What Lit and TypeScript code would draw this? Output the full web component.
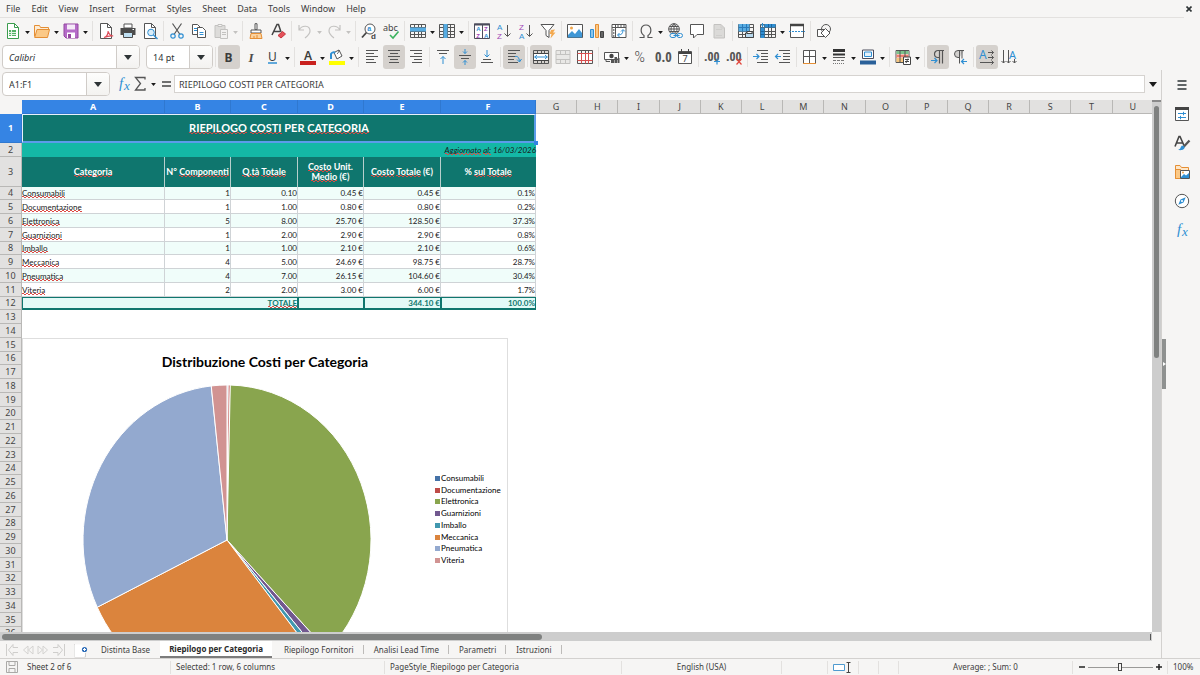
import { LitElement, html, css, svg, nothing } from "lit";
import { customElement, property, state } from "lit/decorators.js";
import { classMap } from "lit/directives/class-map.js";

const G = "#555555";
const B = "#2f8fd3";
const D = "#c3c2c0";

const tableGrid = (c: string) => svg`<path d="M.5 1.5h15v13H.5zM.5 4.5h15M.5 8.5h15M.5 11.5h15M4.5 1.5v13M8.5 1.5v13M11.5 1.5v13" fill="none" stroke=${c}/>`;
const bars = (x: number[][]) => svg`<g stroke=${G}>${x.map(([a, b, y]) => svg`<path d="M${a} ${y}H${b}"/>`)}</g>`;

const ICONS: Record<string, unknown> = {
  new: svg`<path d="M2.5.5h7l4 4v11h-11z" fill="#fff" stroke="#3c9d4e"/><path d="M9.5.5v4h4" fill="none" stroke="#3c9d4e"/><path d="M4 7h7v6H4z" fill="#54b266"/><path d="M4 9.500h7M4 11.500h7M6.500 7v6" stroke="#dff3e2"/>`,
  open: svg`<path d="M.5 13.500V2.500h5l1 2h8v4" fill="#fdebd3" stroke="#e58f35"/><path d="M3 6.500h12.500l-2 8H.700z" fill="#fbc987" stroke="#e58f35"/>`,
  save: svg`<path d="M1 1h14v14H3l-2-2z" fill="#b56cc8" stroke="#94469f"/><path d="M4 1.500h8v5H4z" fill="#f5eaf8"/><path d="M4 9.500h8V15H4z" fill="#fff"/><path d="M5 11h3v4H5z" fill="#94469f"/>`,
  pdf: svg`<path d="M2.500.5h7l4 4v11h-11z" fill="#fff" stroke=${G}/><path d="M9.500.5v4h4" fill="none" stroke=${G}/><path d="M6 14.500c2-.5 4-3 4.200-6.500.5 3 2.300 4.800 5 5-3-.6-6 .2-9.200 1.500z" fill="none" stroke="#dc4b58" stroke-width="1.200"/>`,
  print: svg`<path d="M4 1h8v4H4z" fill="#fff" stroke=${G}/><path d="M.5 5h15v7H.5z" fill="#4b4b4b"/><path d="M3.500 9.500h9v5h-9z" fill="#bfe0f3" stroke="#4b4b4b"/><path d="M12.500 6.500h1.500" stroke="#fff"/>`,
  preview: svg`<path d="M2.500.5h7l4 4v11h-11z" fill="#fff" stroke=${G}/><path d="M9.500.5v4h4" fill="none" stroke=${G}/><circle cx="9" cy="9.500" r="3.300" fill="#d9edf9" stroke=${B}/><path d="M11.500 12l4 4" stroke=${B} stroke-width="1.500"/>`,
  cut: svg`<path d="M3.500.5l7.500 11M12.500.5L5 11.500" stroke=${G} stroke-width="1.200"/><circle cx="4" cy="13" r="2.200" fill="none" stroke=${B} stroke-width="1.200"/><circle cx="12" cy="13" r="2.200" fill="none" stroke=${B} stroke-width="1.200"/>`,
  copy: svg`<path d="M1.500 1.500h5l3 3v7h-8z" fill="#fff" stroke=${G}/><path d="M6.500 4.500h5l3 3v7h-8z" fill="#fff" stroke=${G}/><path d="M3 5.500h3M3 7.500h3M8.500 9.500h4M8.500 11.500h4" stroke=${B}/>`,
  paste: svg`<path d="M2 2.500h10v12H2z" fill="#dddcda" stroke=${D}/><path d="M5 1.500h4v2H5z" fill="#f6f5f4" stroke=${D}/><path d="M7.500 6.500h7v9h-7z" fill="#f2f1f0" stroke=${D}/><path d="M9 9.500h4M9 11.500h4" stroke=${D}/>`,
  clone: svg`<path d="M7 .7h2v6H7z" fill="#fff" stroke=${G}/><path d="M3 7h10v3H3z" fill="#fff" stroke=${G}/><path d="M3 10.500l-1 5h12l-1-5z" fill="#fbd3a0" stroke="#e58f35"/><path d="M6 15v-2M9 15v-3" stroke="#e58f35"/>`,
  clear: svg`<path d="M2 12L7 1.500h1.500L11 9M4 8.500h6" fill="none" stroke="#444" stroke-width="1.500"/><path d="M8 12.500l4.500-4 3 2.500-4.500 4z" fill="#e4525a" stroke="#c8323c"/>`,
  undo: svg`<path d="M2 2v5h5M2.200 6.800C5 1.800 13 2 13 8c0 3-2.500 5-5 7" fill="none" stroke=${D} stroke-width="1.200"/>`,
  redo: svg`<path d="M14 2v5H9M13.800 6.800C11 1.800 3 2 3 8c0 3 2.500 5 5 7" fill="none" stroke=${D} stroke-width="1.200"/>`,
  find: svg`<circle cx="9" cy="6" r="5" fill="#fff" stroke=${G}/><path d="M5.500 9.500l-4.500 5" stroke="#444" stroke-width="1.800"/><text x="6.200" y="8" font-size="7" font-weight="700" font-family="Liberation Sans, sans-serif" fill=${B}>a</text><text x="10" y="15.500" font-size="8" font-weight="700" font-family="Liberation Sans, sans-serif" fill="#444">d</text>`,
  spell: svg`<text x="0" y="7.500" font-size="9" fill="#444">abc</text><path d="M7 12l3 3 5.500-6.500" fill="none" stroke="#3cb35f" stroke-width="1.600"/>`,
  row: svg`${tableGrid(G)}<path d="M0 4.500h16v4H0z" fill="#57ace2"/>`,
  col: svg`${tableGrid(G)}<path d="M4.500 1v14h4V1z" fill="#57ace2"/>`,
  sort: svg`<path d="M.5 1h15v14.500H.5zM8.500 1v14" fill="#fff" stroke="#4c4c5c"/><path d="M0 1.500h16" stroke="#4c4c5c" stroke-width="2"/><g font-size="6" font-weight="700" font-family="Liberation Sans, sans-serif"><text x="2.200" y="7.500" fill=${B}>A</text><text x="2.200" y="14.500" fill="#a045b5">Z</text><text x="10" y="7.500" fill="#a045b5">Z</text><text x="10" y="14.500" fill=${B}>A</text></g>`,
  asc: svg`<g font-size="8" font-family="Liberation Sans, sans-serif"><text x="1" y="6.500" fill=${B}>A</text><text x="1" y="15.500" fill="#a045b5">Z</text></g><path d="M11.500 2v11M8.500 10.500l3 3 3-3" fill="none" stroke=${G}/>`,
  desc: svg`<g font-size="8" font-family="Liberation Sans, sans-serif"><text x="1" y="6.500" fill="#a045b5">Z</text><text x="1" y="15.500" fill=${B}>A</text></g><path d="M11.500 2v11M8.500 10.500l3 3 3-3" fill="none" stroke=${G}/>`,
  filter: svg`<path d="M1 1.500h13l-5 6v7l-3-2V7.500z" fill="#fff" stroke=${G}/><path d="M11 7l4-.5-2 3h2.500l-5 6 1-4.500H9.500z" fill="#f3a94f"/>`,
  image: svg`<path d="M.5 1.500h15v13H.5z" fill="#fff" stroke=${G}/><path d="M1 12l4-4 3 3 4-5 3 4v4.500H1z" fill="#3f97d6"/><circle cx="4.500" cy="5" r="1.500" fill="#f0a64d"/>`,
  chart: svg`<path d="M1.500 6.500h3v8h-3z" fill="#8cc5ea" stroke=${B}/><path d="M6.500 1.500h3v13h-3z" fill="#fbc987" stroke="#e58f35"/><path d="M11.500 8.500h3v6h-3z" fill="#666" stroke="#444"/>`,
  pivot: svg`<path d="M1 1.500h14v13H1zM1 4.500h14M4.500 1.500v13" fill="#fff" stroke=${G}/><path d="M6 3h8M2.800 6v8" stroke=${G} stroke-dasharray="2 1"/><path d="M7 12c3.500 0 5-1.500 5-5M10 8.500l2-2 2 2M8.500 10l-2 2 2 2" fill="none" stroke=${B}/>`,
  omega: svg`<path d="M1.500 14.500H6v-2C1.500 9.500 2.500 2 8 2s6.500 7.500 2 10.500v2h4.500" fill="none" stroke=${G} stroke-width="1.200"/>`,
  link: svg`<circle cx="7" cy="6" r="5.300" fill="#fff" stroke=${G}/><path d="M1.700 6h10.600M7 .7v10M2.500 3.500h9M2.500 8.500h9M7 .7c-4 3-4 8 0 10.600M7 .7c4 3 4 8 0 10.600" fill="none" stroke=${G}/><rect x="3" y="10.500" width="6" height="4" rx="2" fill="#f6f5f4" stroke=${B}/><rect x="10" y="10.500" width="5.500" height="4" rx="2" fill="#f6f5f4" stroke=${B}/><path d="M6.500 12.500h6" stroke=${B}/>`,
  comment: svg`<path d="M1.500 1.500h13v10H8l-3.500 3.500v-3.500h-3z" fill="#fff" stroke=${G}/>`,
  headfoot: svg`<path d="M3 1.500h7l3.500 3.500v10H3z" fill="#dbdad8" stroke=${D}/><path d="M10 1.500v3.500h3.500M5 6.500h6M5 12.500h6" fill="none" stroke="#cfcecc"/>`,
  printarea: svg`${tableGrid(G)}<path d="M.5 1h11v7.500H.5z" fill="#57ace2"/><path d="M.5 4.500h11M4.500 1v7.500M8.500 1v7.500" stroke="#2b7ab8"/><path d="M7.500 10h8v4.500h-8z" fill="#b8d9ee" stroke="#444"/><path d="M9 8.500h5v2H9z" fill="#fff" stroke="#444"/>`,
  freeze: svg`${tableGrid(G)}<path d="M4.500 1h11v3.500h-11zM.5 4.500h4v10.500h-4z" fill="#2f8fd3"/><path d="M8.500 1v3.500M11.500 1v3.500M.5 8.500h4M.5 11.500h4" stroke="#1b66a0"/><path d="M2.500 0v4M.8 2h3.500" stroke=${B}/>`,
  split: svg`<path d="M1.500 2.500h13v12h-13z" fill="#fff" stroke=${G}/><path d="M1 2h14" stroke="#444" stroke-width="2.500"/><path d="M0 8.500h16" stroke=${B} stroke-dasharray="2 1"/>`,
  shapes: svg`<path d="M1.500 6.500h7v7h-7z" fill="#fff" stroke=${G}/><circle cx="10" cy="6" r="4.500" fill="none" stroke=${G}/><path d="M9.500 5.500l4.500 4.500-4.500 4.500L5 10z" fill="#fff" stroke=${G}/>`,
  bold: svg`<text x="3.500" y="12.500" font-size="12" font-weight="700" fill="#3c3c3c">B</text>`,
  italic: svg`<text x="5.500" y="12.500" font-size="13" font-style="italic" font-family="Liberation Serif, serif" font-weight="700" fill="#4c4c4c">I</text>`,
  underline: svg`<text x="3" y="11.500" font-size="12" fill="#3c3c3c">U</text><path d="M3 14h9" stroke=${B} stroke-width="1.500"/>`,
  fontcolor: svg`<text x="4" y="10.500" font-size="12" font-weight="600" fill="#3c3c3c">A</text><path d="M0 12h16v4H0z" fill="#c9211e"/>`,
  highlight: svg`<path d="M5 3.500l5-2.500 3 6-5 3z" fill="#fff" stroke=${G}/><path d="M2 10V5c1-2 3-2 4-1" fill="none" stroke=${B} stroke-width="2"/><path d="M10 1c0 2-1 3-2 4" fill="none" stroke=${G}/><path d="M0 12h16v4H0z" fill="#ffff00"/>`,
  left: bars([[2, 14, 1.5], [2, 10, 4.5], [2, 14, 7.5], [2, 10, 10.5], [2, 12, 13.5]]),
  center: bars([[2, 14, 1.5], [4, 12, 4.5], [2, 14, 7.5], [4, 12, 10.5], [3, 13, 13.5]]),
  right: bars([[2, 14, 1.5], [6, 14, 4.5], [2, 14, 7.5], [6, 14, 10.5], [4, 14, 13.5]]),
  top: svg`${bars([[2, 14, 1.5], [4, 12, 4.5]])}<path d="M8 15V7.500M5.500 10L8 7.500 10.500 10" fill="none" stroke=${B}/>`,
  middle: svg`${bars([[2, 14, 6.5], [4, 12, 9.5]])}<path d="M8 0v4.500M6 2.500l2 2 2-2M8 16v-4.500M6 13.500l2-2 2 2" fill="none" stroke=${B}/>`,
  bottom: svg`${bars([[4, 12, 10.5], [2, 14, 13.5]])}<path d="M8 1v7M5.500 5.500L8 8l2.500-2.500" fill="none" stroke=${B}/>`,
  wrap: svg`${bars([[2, 14, 1.5], [2, 10, 4.5], [2, 9, 7.5], [2, 8, 10.5], [2, 12, 13.5]])}<path d="M9 7.500c3-.5 4 1 4.500 5M11 10.500l2.500 2.500 2-3" fill="none" stroke=${B}/>`,
  merge: svg`${tableGrid(G)}<path d="M1 5h14v6H1z" fill="#fff"/><path d="M.5 4.500h15M.5 11.500h15" stroke="#444"/><path d="M1.500 8h13M4 6L1.800 8 4 10M12 6l2.200 2L12 10" fill="none" stroke=${B}/>`,
  mergecells: svg`<path d="M1 1.500h14v13H1zM1 5.500h14M1 10.500h14M5.500 1.500v4M10.500 1.500v4M5.500 10.500v4M10.500 10.500v4" fill="#e9e8e6" stroke=${D}/>`,
  unmerge: svg`${tableGrid(G)}<path d="M1 5h14v6H1z" fill="#fff"/><path d="M.5 4.500h15M.5 11.500h15M4.500 4.500v10M8.500 4.500v10M11.500 4.500v10" stroke="#d94f50"/>`,
  currency: svg`<path d="M.5 3.500h14v7H.5z" fill="#fff" stroke=${G}/><circle cx="7.500" cy="7" r="2.200" fill="#444"/><path d="M7 10h3v4H7zM10.500 8h2.500v6h-2.500zM13.500 9h2v5h-2z" fill="#555"/><path d="M2 10.500v2h4" fill="none" stroke=${G}/>`,
  percent: svg`<text x="1.500" y="13" font-size="14" font-family="Roboto, sans-serif" font-weight="300" fill="#444">%</text>`,
  number: svg`<text x="0" y="13" font-size="14" font-family="Liberation Sans Narrow, Open Sans Condensed, sans-serif" fill="#555">0.0</text>`,
  date: svg`<path d="M1.500 2.500h13v12h-13z" fill="#fff" stroke=${G}/><path d="M1.500 4h13" stroke="#444" stroke-width="2"/><path d="M4.500 0v3M11.500 0v3" stroke="#444"/><text x="5.500" y="13" font-size="9" fill="#444">7</text>`,
  adddec: svg`<text x="0" y="12" font-size="13" font-family="Liberation Sans Narrow, Open Sans Condensed, sans-serif" fill="#555">.00</text><path d="M13 9.500v6M10 12.500h6" stroke=${B} stroke-width="1.200"/>`,
  deldec: svg`<text x="0" y="12" font-size="13" font-family="Liberation Sans Narrow, Open Sans Condensed, sans-serif" fill="#555">.00</text><path d="M10.500 10l5 5.500M15.500 10l-5 5.500" stroke="#e2453c" stroke-width="1.200"/>`,
  indent: svg`${bars([[4, 15, 1.5], [8, 15, 4.5], [8, 15, 7.5], [8, 15, 10.5], [4, 15, 13.5]])}<path d="M0 7.500h6M3.500 5L6 7.500 3.500 10" fill="none" stroke=${B} stroke-width="1.200"/>`,
  outdent: svg`${bars([[4, 15, 1.5], [8, 15, 4.5], [8, 15, 7.5], [8, 15, 10.5], [4, 15, 13.5]])}<path d="M6 7.500H.5M3 5L.5 7.500 3 10" fill="none" stroke=${B} stroke-width="1.200"/>`,
  borders: svg`<path d="M1.500 14.500v-13h12v13M1.500 7.500h12M7.500 1.500v13" fill="#fff" stroke=${G}/><path d="M1 14.500h13" stroke="#e58f35"/>`,
  lines: svg`<path d="M2 1.500h12" stroke="#333" stroke-width="3"/><path d="M2 5.500h12" stroke="#333" stroke-width="2"/><path d="M2 8.500h12" stroke="#555"/><path d="M2 11.500h12" stroke="#777" stroke-dasharray="3 1"/><path d="M2 14.500h12" stroke="#777" stroke-dasharray="1 1"/>`,
  bordercolor: svg`<path d="M2.500 1h11v8.500h-11z" fill="#fff" stroke="#4c4c5c"/><path d="M4.500 3h7v4.500h-7z" fill="#e6f1fa" stroke=${B}/><path d="M0 11.500h16v4H0z" fill="#2a6099"/>`,
  cond: svg`<path d="M1 1.500h13v12H1z" fill="#fff" stroke=${G}/><path d="M1.500 2h12v3h-12z" fill="#7cc48c"/><path d="M1.500 5.500h12v3h-12z" fill="#f08070"/><path d="M1.500 9h12v4h-12z" fill="#f7c77f"/><path d="M5 1.500v12M10 1.500v12" stroke=${G}/><path d="M8.500 8h7v7.500h-7z" fill="#fff" stroke="#444"/><path d="M10 10.500h4M10 12.500h4M13 9.500l-2 4.500" stroke="#444"/>`,
  ltr: svg`<path d="M14 1.500H8a3.500 3.500 0 0 0 0 7h1.500M9.500 1.500v13M12.500 1.500v13" fill="none" stroke=${G} stroke-width="1.200"/><path d="M1 11.500h6M4.500 9L7 11.500 4.500 14" fill="none" stroke=${B} stroke-width="1.200"/>`,
  rtl: svg`<path d="M12 1.500H6a3.500 3.500 0 0 0 0 7h1.500" fill="#d2d0ce" stroke=${G}/><path d="M7.500 1.500v13M10 1.500v8" stroke=${G}/><path d="M15 12.500H9.500M12 10l-2.500 2.500L12 15" fill="none" stroke=${B} stroke-width="1.200"/>`,
  horiz: svg`<text x="0" y="10" font-size="12" fill=${B}>A</text><path d="M9 3.500h5.500M9 8.500h5.500M1 13.500h13.500M12.500 1.500l2 2-2 2M12.500 6.500l2 2-2 2M12.500 11.500l2 2-2 2" fill="none" stroke=${G}/>`,
  vert: svg`<text x="8" y="10" font-size="11" fill=${B}>A</text><path d="M2.500 1v13M.5 12l2 2 2-2M7.500 1v13M5.500 12l2 2 2-2M13.500 10v4M11.500 12l2 2 2-2" fill="none" stroke=${G}/>`,
  fx: svg`<text x="3" y="12" font-size="15" font-style="italic" font-family="Liberation Serif, serif" fill=${B}>f</text><text x="8" y="14" font-size="13" font-style="italic" font-family="Liberation Serif, serif" fill=${B}>x</text>`,
  sigma: svg`<path d="M13 3.500v-2H3.500l5 6-5 6.500H13v-2" fill="none" stroke=${G} stroke-width="1.300"/>`,
  equal: svg`<path d="M4 6h9M4 10h9" stroke="#444" stroke-width="1.600"/>`,
  burger: svg`<path d="M3.500 4h9M3.500 8h9M3.500 12h9" stroke="#2e3436" stroke-width="1.400"/>`,
  props: svg`<path d="M1.500 1.500h13v13h-13z" fill="#fff" stroke=${G}/><path d="M1 2.500h14" stroke="#444" stroke-width="3"/><path d="M4 7.500h8M4 11.500h8M9.500 5.800v3.500M6.500 9.800v3.500" stroke=${B}/>`,
  styles: svg`<path d="M1 11.500L5 1.500h1l4 9M3 8h5.500" fill="none" stroke="#444" stroke-width="1.600"/><path d="M15.500 5.500L9.500 12" stroke=${G} stroke-width="2.200"/><path d="M4 15c3.500.5 7 0 6.500-3.500L8 10.500c-1.500 1-1 3.500-4 4.500z" fill=${B}/>`,
  gallery: svg`<path d="M1.500 14.500V1.500h4.500l1.500 2h7v3" fill="#fde6c8" stroke="#e58f35"/><path d="M1.500 14.500V5.500h5" fill="none" stroke="#e58f35"/><path d="M1.500 14.500h5v-9h-5z" fill="#fbc987" stroke="#e58f35"/><path d="M6.500 6.500h9v8h-9z" fill="#fff" stroke=${G}/><path d="M7 13l3-3 2 1.500 3-2.500v5H7z" fill=${B}/><circle cx="9" cy="8.500" r="1" fill="#f0a64d"/>`,
  navigator: svg`<circle cx="8" cy="8" r="6.700" fill="#fff" stroke=${G}/><path d="M11.700 4.300L9.500 9.500l-5.200 2.200L6.500 6.500z" fill=${B}/><circle cx="8" cy="8" r="1.100" fill="#fff"/>`,
  statussave: svg`<path d="M2.500 2.500h11v11h-11zM5 2.500v4h6v-4M5 13.500v-4h6v4" fill="none" stroke="#aaa9a7"/>`,
  newtab: svg`<path d="M1.500 2v13h11V11" fill="#fff" stroke="#cfcecc"/><path d="M1.500 2.500h7l3 3V15h-10z" fill="#fff"/><circle cx="11.500" cy="7.500" r="2.600" fill="#2c6cb8"/><path d="M11.500 6v3M10 7.500h3" stroke="#fff"/>`,
  first: svg`<path d="M1.500 2v12M13 5.500H8V2.500L3.500 8 8 13.500v-3h5" fill="none" stroke="#cfcecc"/>`,
  prev: svg`<path d="M8 4L3.500 8 8 12zM13 4L8.500 8 13 12z" fill="none" stroke="#d4d3d1"/>`,
  next: svg`<path d="M3 4l4.500 4L3 12zM8 4l4.500 4L8 12z" fill="none" stroke="#d4d3d1"/>`,
  last: svg`<path d="M14.500 2v12M3 5.500h5V2.500L12.500 8 8 13.500v-3H3" fill="none" stroke="#cfcecc"/>`,
};

const icon = (name: string) => html`<svg class="icon" viewBox="0 0 16 16" aria-hidden="true">${ICONS[name]}</svg>`;
const triangle = html`<svg class="tri" viewBox="0 0 8 5" aria-hidden="true"><path d="M0 0h8L4 5z" fill="currentColor" /></svg>`;

const iconCss = css`
  .icon {
    display: block;
    flex: none;
    width: 16px;
    height: 16px;
    overflow: visible;
    font-family: "Noto Sans", sans-serif;
  }
  .tri {
    display: block;
    flex: none;
    width: 5px;
    height: 3px;
  }
  button {
    display: flex;
    align-items: center;
    justify-content: center;
    margin: 0;
    padding: 0;
    border: 0;
    background: none;
    color: inherit;
    font: inherit;
  }
`;

type Tool = { icon: string; label: string; drop?: boolean; on?: boolean; off?: boolean } | "|";
const t = (icon: string, label: string, flags = ""): Tool => ({
  icon,
  label,
  drop: flags.includes("d"),
  on: flags.includes("p"),
  off: flags.includes("x"),
});

const STANDARD: Tool[] = [
  t("new", "New", "d"), t("open", "Open", "d"), t("save", "Save", "d"), "|",
  t("pdf", "Export as PDF"), t("print", "Print"), t("preview", "Print Preview"), "|",
  t("cut", "Cut"), t("copy", "Copy"), t("paste", "Paste", "dx"), "|",
  t("clone", "Clone Formatting"), t("clear", "Clear Direct Formatting"), "|",
  t("undo", "Undo", "dx"), t("redo", "Redo", "dx"), "|",
  t("find", "Find and Replace"), t("spell", "Spelling"), "|",
  t("row", "Row", "d"), t("col", "Column", "d"), "|",
  t("sort", "Sort"), t("asc", "Sort Ascending"), t("desc", "Sort Descending"), t("filter", "AutoFilter"), "|",
  t("image", "Insert Image"), t("chart", "Insert Chart"), t("pivot", "Pivot Table"), "|",
  t("omega", "Special Character", "d"), t("link", "Hyperlink"), t("comment", "Comment"), t("headfoot", "Headers and Footers", "x"), "|",
  t("printarea", "Define Print Area"), t("freeze", "Freeze Rows and Columns", "d"), t("split", "Split Window"), "|",
  t("shapes", "Show Draw Functions"),
];

const FORMATTING: Tool[] = [
  t("bold", "Bold", "p"), t("italic", "Italic"), t("underline", "Underline", "d"), "|",
  t("fontcolor", "Font Color", "d"), t("highlight", "Background Color", "d"), "|",
  t("left", "Align Left"), t("center", "Align Center", "p"), t("right", "Align Right"), "|",
  t("top", "Align Top"), t("middle", "Center Vertically", "p"), t("bottom", "Align Bottom"), "|",
  t("wrap", "Wrap Text", "p"), "|",
  t("merge", "Merge and Center", "p"), t("mergecells", "Merge Cells", "x"), t("unmerge", "Unmerge Cells"), "|",
  t("currency", "Format as Currency", "d"), t("percent", "Format as Percent"), t("number", "Format as Number"), t("date", "Format as Date"), "|",
  t("adddec", "Add Decimal Place"), t("deldec", "Delete Decimal Place"), "|",
  t("indent", "Increase Indent"), t("outdent", "Decrease Indent"), "|",
  t("borders", "Borders", "d"), t("lines", "Border Style", "d"), t("bordercolor", "Border Color", "d"), "|",
  t("cond", "Conditional", "d"), "|",
  t("ltr", "Left-To-Right", "p"), t("rtl", "Right-To-Left"), "|",
  t("horiz", "Text direction left to right", "p"), t("vert", "Text direction top to bottom"),
];

@customElement("tool-strip")
class ToolStrip extends LitElement {
  @property({ attribute: false }) tools: Tool[] = [];

  static styles = [
    iconCss,
    css`
      :host {
        display: flex;
        align-items: center;
      }
      .tool {
        width: 22px;
        height: 24px;
        border-radius: 3px;
      }
      .on {
        background: #d5d1cd;
      }
      .drop {
        width: 7px;
        height: 24px;
        padding-top: 2px;
        color: #1a1a1a;
      }
      .drop:disabled {
        color: #c3c2c0;
      }
      .sep {
        width: 1px;
        height: 20px;
        margin: 0 2px;
        background: #e3e1df;
      }
      .drop + .sep {
        margin-left: 3px;
      }
    `,
  ];

  render() {
    return this.tools.map((tool) =>
      tool === "|"
        ? html`<span class="sep"></span>`
        : html`<button class=${classMap({ tool: true, on: !!tool.on })} aria-label=${tool.label} ?disabled=${tool.off}>${icon(tool.icon)}</button>${tool.drop
              ? html`<button class="drop" aria-label="${tool.label} options" ?disabled=${tool.off}>${triangle}</button>`
              : nothing}`
    );
  }
}

@customElement("combo-box")
class ComboBox extends LitElement {
  @property() label = "";
  @property() value = "";
  @property({ type: Boolean }) slanted = false;

  static styles = [
    iconCss,
    css`
      :host {
        display: block;
      }
      .combo {
        display: grid;
        grid-template-columns: 1fr 23px;
        height: 24px;
        box-sizing: border-box;
        border: 1px solid #d0ccc8;
        border-radius: 4px;
        background: #fff;
        overflow: hidden;
      }
      .field {
        grid-area: 1 / 1 / 2 / 3;
        appearance: none;
        width: 100%;
        padding: 0 6px;
        border: 0;
        background: none;
        color: #2e3436;
        font: 9px "Noto Sans", sans-serif;
      }
      .slanted {
        font-style: italic;
      }
      .knob {
        grid-area: 1 / 2;
        display: flex;
        align-items: center;
        justify-content: center;
        border-left: 1px solid #d0ccc8;
        background: linear-gradient(#fdfdfc, #f3f2f0);
        pointer-events: none;
        color: #2e3436;
      }
      .knob .tri {
        width: 8px;
        height: 5px;
      }
    `,
  ];

  render() {
    return html`<div class="combo">
      <select class=${classMap({ field: true, slanted: this.slanted })} aria-label=${this.label}>
        <option>${this.value}</option>
      </select>
      <span class="knob">${triangle}</span>
    </div>`;
  }
}

const CATEGORIES = [
  { name: "Consumabili", parts: 1, qty: "0.10", unit: "0.45", total: 0.45, share: "0.1%", color: "#4572a7" },
  { name: "Documentazione", parts: 1, qty: "1.00", unit: "0.80", total: 0.8, share: "0.2%", color: "#be4b48" },
  { name: "Elettronica", parts: 5, qty: "8.00", unit: "25.70", total: 128.5, share: "37.3%", color: "#89a54e" },
  { name: "Guarnizioni", parts: 1, qty: "2.00", unit: "2.90", total: 2.9, share: "0.8%", color: "#71588f" },
  { name: "Imballo", parts: 1, qty: "1.00", unit: "2.10", total: 2.1, share: "0.6%", color: "#4198af" },
  { name: "Meccanica", parts: 4, qty: "5.00", unit: "24.69", total: 98.75, share: "28.7%", color: "#db843d" },
  { name: "Pneumatica", parts: 4, qty: "7.00", unit: "26.15", total: 104.6, share: "30.4%", color: "#93a9cf" },
  { name: "Viteria", parts: 2, qty: "2.00", unit: "3.00", total: 6, share: "1.7%", color: "#d19392" },
];

@customElement("cost-chart")
class CostChart extends LitElement {
  static styles = css`
    :host {
      display: grid;
      grid-template-columns: 1fr 72px;
      grid-template-rows: 45px 1fr;
      box-sizing: border-box;
      border: 1px solid #dedede;
      background: #fff;
      font-family: Lato, sans-serif;
      color: #000;
    }
    .title {
      grid-area: 1 / 1 / 2 / 3;
      margin: 0;
      text-align: center;
      font-size: 14px;
      line-height: 45px;
      font-weight: 700;
    }
    .pie {
      grid-area: 2 / 1;
      width: 290px;
      height: 312px;
      margin-left: 59px;
    }
    .legend {
      grid-area: 1 / 2 / 3 / 3;
      align-self: center;
      display: flex;
      flex-direction: column;
      justify-content: space-between;
      height: 93px;
      margin: 0;
      padding: 0;
      list-style: none;
      font-size: 8px;
      line-height: 11px;
    }
    .entry {
      display: flex;
      align-items: center;
      gap: 1px;
    }
    .swatch {
      width: 5px;
      height: 5px;
    }
  `;

  private slices() {
    const sum = CATEGORIES.reduce((s, c) => s + c.total, 0);
    const [cx, cy, rx, ry] = [145, 156, 144, 155];
    let at = 0;
    return CATEGORIES.map((c) => {
      const point = (v: number) => {
        const a = (v / sum) * 2 * Math.PI;
        return `${(cx + rx * Math.sin(a)).toFixed(2)} ${(cy - ry * Math.cos(a)).toFixed(2)}`;
      };
      const start = point(at);
      at += c.total;
      return svg`<path d="M${cx} ${cy}L${start}A${rx} ${ry} 0 0 1 ${point(at)}Z" fill=${c.color} stroke="#fff" />`;
    });
  }

  render() {
    return html`
      <h2 class="title">Distribuzione Costi per Categoria</h2>
      <svg class="pie" viewBox="0 0 290 312" role="img" aria-label="Distribuzione Costi per Categoria">${this.slices()}</svg>
      <ul class="legend">
        ${CATEGORIES.map(
          (c) => html`<li class="entry"><svg class="swatch" viewBox="0 0 5 5"><rect width="5" height="5" fill=${c.color} /></svg>${c.name}</li>`
        )}
      </ul>
    `;
  }
}

/* Words that start with ~ are flagged by the spelling checker. */
const checked = (text: string) =>
  text.split(" ").map((w, i) => html`${i ? " " : ""}${w.startsWith("~") ? html`<span class="typo">${w.slice(1)}</span>` : w}`);

@customElement("sheet-grid")
class SheetGrid extends LitElement {
  static styles = css`
    :host {
      display: block;
      position: relative;
      overflow: hidden;
      background: #fff;
      font-family: Lato, sans-serif;
      font-size: 8px;
      line-height: 10px;
      color: #1a1a1a;
    }
    .sheet {
      width: calc(100% + 2px);
      table-layout: fixed;
      border-collapse: separate;
      border-spacing: 0;
    }
    .rowhead { width: 22px; }
    .wa { width: 143px; }
    .wb { width: 66px; }
    .wc { width: 67px; }
    .wd { width: 66px; }
    .we { width: 77px; }
    .wf { width: 95px; }
    th,
    td {
      box-sizing: border-box;
      height: 14px;
      padding: 0;
      vertical-align: middle;
    }
    .head,
    .num {
      background: #e2e1e0;
      border-right: 1px solid #b9b8b6;
      border-bottom: 1px solid #b9b8b6;
      color: #454545;
      font: 9px/12px "Noto Sans", sans-serif;
      text-align: center;
      overflow: hidden;
    }
    .head.sel,
    .num.sel {
      background: #3584e4;
      border-color: #2f78d0;
      color: #fff;
      font-weight: 700;
    }
    .corner {
      background: #f6f5f4;
    }
    .line:nth-child(4n) > * {
      height: 13px;
    }
    .line:nth-child(1) > * { height: 29px; }
    .line:nth-child(3) > * { height: 30px; }
    .title {
      position: relative;
      padding-bottom: 2px;
      background: #0f766e;
      color: #fff;
      font-size: 11px;
      line-height: 14px;
      font-weight: 700;
      text-align: center;
    }
    .title::after {
      content: "";
      position: absolute;
      inset: 0;
      border: 1px solid #e8f1fc;
      border-bottom: 2px solid #5b9cea;
      border-right: 2px solid #5b9cea;
    }
    .handle {
      position: absolute;
      right: -2px;
      bottom: -2px;
      z-index: 1;
      width: 4px;
      height: 4px;
      background: #3584e4;
    }
    .updated {
      padding-bottom: 1px;
      background: #14b8a6;
      font-style: italic;
      text-align: right;
    }
    .label {
      background: #0f766e;
      border-right: 1px solid #b7cfcc;
      color: #fff;
      font-size: 9px;
      font-weight: 700;
      text-align: center;
    }
    .label:last-of-type {
      border-right-color: #0f766e;
    }
    .cell {
      border-right: 1px solid #cfd3d6;
      border-bottom: 1px solid #cfd3d6;
      text-align: right;
      white-space: nowrap;
    }
    .cell.name {
      text-align: left;
    }
    .line:nth-child(even) > .cell {
      background: #f0fdfa;
    }
    .sum {
      border: 1px solid #0f766e;
      border-bottom-width: 2px;
      background: #e3faf7;
      color: #0f766e;
      font-weight: 700;
      text-align: right;
    }
    .typo {
      background:
        repeating-linear-gradient(90deg, #dc4a45 0 2px, transparent 2px 4px) left bottom 1px / 100% 1px no-repeat,
        repeating-linear-gradient(90deg, transparent 0 2px, #dc4a45 2px 4px) left bottom / 100% 1px no-repeat;
    }
    .chart {
      position: absolute;
      left: 22px;
      top: 238px;
      width: 486px;
      height: 363px;
    }
  `;

  private data(n: number) {
    if (n === 1)
      return html`<td class="title" colspan="6">${checked("~RIEPILOGO ~COSTI PER ~CATEGORIA")}<span class="handle"></span></td>`;
    if (n === 2) return html`<td class="updated" colspan="6">${checked("~Aggiornato ~al: 16/03/2026")}</td>`;
    if (n === 3)
      return ["~Categoria", "N° ~Componenti", "~Q.tà ~Totale", "~Costo Unit. ~Medio (€)", "~Costo ~Totale (€)", "% ~sul ~Totale"].map(
        (l) => html`<td class="label">${checked(l)}</td>`
      );
    const c = CATEGORIES[n - 4];
    if (c)
      return html`<td class="cell name">${checked("~" + c.name)}</td>
        <td class="cell">${c.parts}</td>
        <td class="cell">${c.qty}</td>
        <td class="cell">${c.unit} €</td>
        <td class="cell">${c.total.toFixed(2)} €</td>
        <td class="cell">${c.share}</td>`;
    if (n === 12)
      return html`<td class="sum" colspan="3">${checked("~TOTALE")}</td>
        <td class="sum"></td>
        <td class="sum">344.10 €</td>
        <td class="sum">100.0%</td>`;
    return nothing;
  }

  render() {
    const letters = [..."ABCDEFGHIJKLMNOPQRSTU"];
    return html`
      <table class="sheet">
        <colgroup>
          <col class="rowhead" />
          ${["wa", "wb", "wc", "wd", "we", "wf"].map((w) => html`<col class=${w} />`)}
          ${letters.slice(6).map(() => html`<col />`)}
        </colgroup>
        <thead>
          <tr>
            <th class="corner"></th>
            ${letters.map((l, i) => html`<th class=${classMap({ head: true, sel: i < 6 })} scope="col">${l}</th>`)}
          </tr>
        </thead>
        <tbody>
          ${Array.from({ length: 36 }, (_, i) => i + 1).map(
            (n) => html`<tr class="line"><th class=${classMap({ num: true, sel: n === 1 })} scope="row">${n}</th>${this.data(n)}</tr>`
          )}
        </tbody>
      </table>
      <cost-chart class="chart"></cost-chart>
    `;
  }
}

const MENUS = ["File", "Edit", "View", "Insert", "Format", "Styles", "Sheet", "Data", "Tools", "Window", "Help"];
const TABS = ["Distinta Base", "Riepilogo per Categoria", "Riepilogo Fornitori", "Analisi Lead Time", "Parametri", "Istruzioni"];

@customElement("app-root")
class AppRoot extends LitElement {
  @state() private active = 1;

  static styles = [
    iconCss,
    css`
      :host {
        display: flex;
        flex-direction: column;
        height: 100vh;
        overflow: hidden;
        background: #f6f5f4;
        color: #3d3d3d;
        font: 9px/12px "Noto Sans", sans-serif;
      }
      .menubar {
        display: flex;
        align-items: center;
        height: 17px;
        flex: none;
        margin-right: 4px;
        padding-left: 6px;
        gap: 11px;
      }
      .close {
        margin-left: auto;
        width: 14px;
        height: 14px;
      }
      .cross {
        width: 6px;
        height: 6px;
      }
      .toolbar {
        display: flex;
        align-items: center;
        height: 26px;
        flex: none;
        padding-left: 2px;
      }
      .standard {
        height: 27px;
        margin-right: 16px;
        border-top: 1px solid #e3e1df;
        box-sizing: border-box;
      }
      .family {
        width: 138px;
        margin-right: 6px;
      }
      .size {
        width: 67px;
        margin-right: 2px;
      }
      .rule {
        width: 1px;
        height: 20px;
        margin-right: 2px;
        background: #e3e1df;
      }
      .main {
        display: flex;
        flex: 1;
        min-height: 0;
      }
      .work {
        display: flex;
        flex-direction: column;
        flex: 1;
        min-width: 0;
        border-right: 1px solid #d3d1cf;
      }
      .formula {
        display: flex;
        align-items: center;
        height: 30px;
        flex: none;
        box-sizing: border-box;
        padding: 0 0 2px 2px;
      }
      .cellname {
        width: 108px;
        margin-right: 6px;
      }
      .fn {
        width: 16px;
        height: 20px;
      }
      .mini {
        width: 8px;
        height: 20px;
        margin: 0 1px;
        color: #1a1a1a;
      }
      .input {
        flex: 1;
        min-width: 0;
        height: 18px;
        box-sizing: border-box;
        margin: 0;
        padding: 0 4px;
        border: 1px solid #d6d3d0;
        background: #fff;
        color: #3d3d3d;
        font: 9px "Noto Sans", sans-serif;
      }
      .expand {
        width: 16px;
        height: 20px;
        color: #1a1a1a;
      }
      .expand .tri {
        width: 8px;
        height: 5px;
      }
      .canvas {
        display: flex;
        flex: 1;
        min-height: 0;
      }
      .sheet {
        flex: 1;
        min-width: 0;
      }
      .vscroll {
        width: 9px;
        box-sizing: border-box;
        padding: 0 2px;
        border-top: 2px solid #8a8a8a;
        background: #cdcdcd;
      }
      .vthumb {
        height: 252px;
        margin-top: 4px;
        border-radius: 3px;
        background: #7f8180;
      }
      .hscroll {
        display: flex;
        align-items: center;
        justify-content: space-between;
        height: 9px;
        flex: none;
        margin-right: 9px;
        padding: 0 1px 0 2px;
        background: #cdcdcd;
      }
      .hthumb {
        width: 47%;
        height: 6px;
        border-radius: 3px;
        background: #7f8180;
      }
      .grip {
        width: 1px;
        height: 6px;
        background: #555;
      }
      .tabs {
        display: flex;
        align-items: center;
        height: 17px;
        flex: none;
        padding-left: 5px;
        font-size: 8px;
      }
      .nav {
        width: 15px;
        height: 17px;
      }
      .add {
        width: 26px;
        height: 17px;
        padding-left: 5px;
      }
      .tab {
        position: relative;
        height: 17px;
        padding: 0 10px;
      }
      .tab + .tab::after {
        content: "";
        position: absolute;
        right: 0;
        top: 4px;
        width: 1px;
        height: 9px;
        background: #bdbbb9;
      }
      .tab.active {
        margin-right: 2px;
        padding: 0 9px;
        box-sizing: border-box;
        border-bottom: 2px solid #7c7c7c;
        background: #fff;
        color: #2a2a2a;
        font-weight: 700;
      }
      .tab.active::after {
        content: none;
      }
      .sidebar {
        display: flex;
        flex: none;
        width: 38px;
      }
      .collapse {
        align-self: center;
        width: 4px;
        height: 50px;
        background: #8f9190;
      }
      .notch {
        width: 3px;
        height: 4px;
      }
      .deck {
        display: flex;
        flex-direction: column;
        align-items: center;
        flex: 1;
        gap: 13px;
        padding: 7px 3px 0 0;
      }
      .panel {
        width: 16px;
        height: 16px;
      }
      .status {
        display: grid;
        grid-template-columns: 20px 150fr 214fr 237fr 160fr 46fr 31px 20px 20px 174fr 95px 33px;
        align-items: center;
        height: 17px;
        flex: none;
        box-sizing: border-box;
        border-top: 1px solid #d3d1cf;
        font-size: 8px;
      }
      .part {
        display: flex;
        align-items: center;
        height: 13px;
        padding-left: 5px;
        border-left: 1px solid #e3e1df;
      }
      .first {
        padding-left: 6px;
        border-color: transparent;
      }
      .middle {
        justify-content: center;
        padding: 0;
      }
      .doc {
        padding-left: 4px;
      }
      .mode {
        gap: 3px;
      }
      .modeicon {
        width: 18px;
        height: 11px;
      }
      .zoom {
        justify-content: space-between;
        padding: 0 3px 0 4px;
      }
      .step {
        width: 10px;
        height: 12px;
      }
      .step .tick {
        width: 8px;
        height: 8px;
      }
      .slider {
        appearance: none;
        width: 65px;
        height: 10px;
        margin: 0;
        background: linear-gradient(#9b9a98, #9b9a98) center / 100% 1px no-repeat;
      }
      .slider::-webkit-slider-thumb {
        appearance: none;
        width: 4px;
        height: 8px;
        box-sizing: border-box;
        border: 1px solid #444;
        background: #f6f5f4;
      }
    `,
  ];

  render() {
    return html`
      <nav class="menubar" aria-label="Menu">
        ${MENUS.map((m) => html`<button>${m}</button>`)}
        <button class="close" aria-label="Close document">
          <svg class="cross" viewBox="0 0 6 6"><path d="M.5.5l5 5M5.500.5l-5 5" stroke="#2e3436" stroke-width="1.600" /></svg>
        </button>
      </nav>
      <div class="toolbar standard"><tool-strip .tools=${STANDARD}></tool-strip></div>
      <div class="toolbar">
        <combo-box class="family" label="Font Name" value="Calibri" slanted></combo-box>
        <combo-box class="size" label="Font Size" value="14 pt"></combo-box>
        <span class="rule"></span>
        <tool-strip .tools=${FORMATTING}></tool-strip>
      </div>
      <div class="main">
        <div class="work">
          <div class="formula">
            <combo-box class="cellname" label="Name Box" value="A1:F1"></combo-box>
            <button class="fn" aria-label="Function Wizard">${icon("fx")}</button>
            <button class="fn" aria-label="Select Function">${icon("sigma")}</button>
            <button class="mini" aria-label="Function list">${triangle}</button>
            <button class="fn" aria-label="Formula">${icon("equal")}</button>
            <input class="input" aria-label="Input line" .value=${"RIEPILOGO COSTI PER CATEGORIA"} />
            <button class="expand" aria-label="Expand Formula Bar">${triangle}</button>
          </div>
          <div class="canvas">
            <sheet-grid class="sheet"></sheet-grid>
            <div class="vscroll"><div class="vthumb"></div></div>
          </div>
          <div class="hscroll"><div class="hthumb"></div><div class="grip"></div></div>
          <div class="tabs">
            ${["first", "prev", "next", "last"].map((n) => html`<button class="nav" aria-label="${n} sheet">${icon(n)}</button>`)}
            <button class="add" aria-label="Add sheet">${icon("newtab")}</button>
            ${TABS.map(
              (name, i) => html`<button class=${classMap({ tab: true, active: i === this.active })} @click=${() => (this.active = i)}>${name}</button>`
            )}
          </div>
        </div>
        <aside class="sidebar">
          <button class="collapse" aria-label="Show sidebar">
            <svg class="notch" viewBox="0 0 3 4"><path d="M0 0l3 2-3 2z" fill="#fff" /></svg>
          </button>
          <div class="deck">
            ${[["burger", "Sidebar Settings"], ["props", "Properties"], ["styles", "Styles"], ["gallery", "Gallery"], ["navigator", "Navigator"], ["fx", "Functions"]].map(
              ([n, l]) => html`<button class="panel" aria-label=${l}>${icon(n)}</button>`
            )}
          </div>
        </aside>
      </div>
      <footer class="status">
        <span class="doc">${icon("statussave")}</span>
        <span class="part first">Sheet 2 of 6</span>
        <span class="part">Selected: 1 row, 6 columns</span>
        <span class="part">PageStyle_Riepilogo per Categoria</span>
        <span class="part middle">English (USA)</span>
        <span class="part"></span>
        <span class="part mode">
          <svg class="modeicon" viewBox="0 0 18 11"><path d="M.5 2.500h11v6H.5z" fill="#fff" stroke="#4f9bd0" /><path d="M15.500 1v9M13.500.5h4M13.500 10.500h4" stroke="#444" /></svg>
        </span>
        <span class="part"></span>
        <span class="part"></span>
        <span class="part middle">Average: ; Sum: 0</span>
        <span class="part zoom">
          <button class="step" aria-label="Zoom out"><svg class="tick" viewBox="0 0 8 8"><path d="M1 4h6" stroke="#222" stroke-width="1.500" /></svg></button>
          <input class="slider" type="range" aria-label="Zoom" min="0" max="200" value="97" />
          <button class="step" aria-label="Zoom in"><svg class="tick" viewBox="0 0 8 8"><path d="M1 4h6M4 1v6" stroke="#222" stroke-width="1.500" /></svg></button>
        </span>
        <span class="part">100%</span>
      </footer>
    `;
  }
}
